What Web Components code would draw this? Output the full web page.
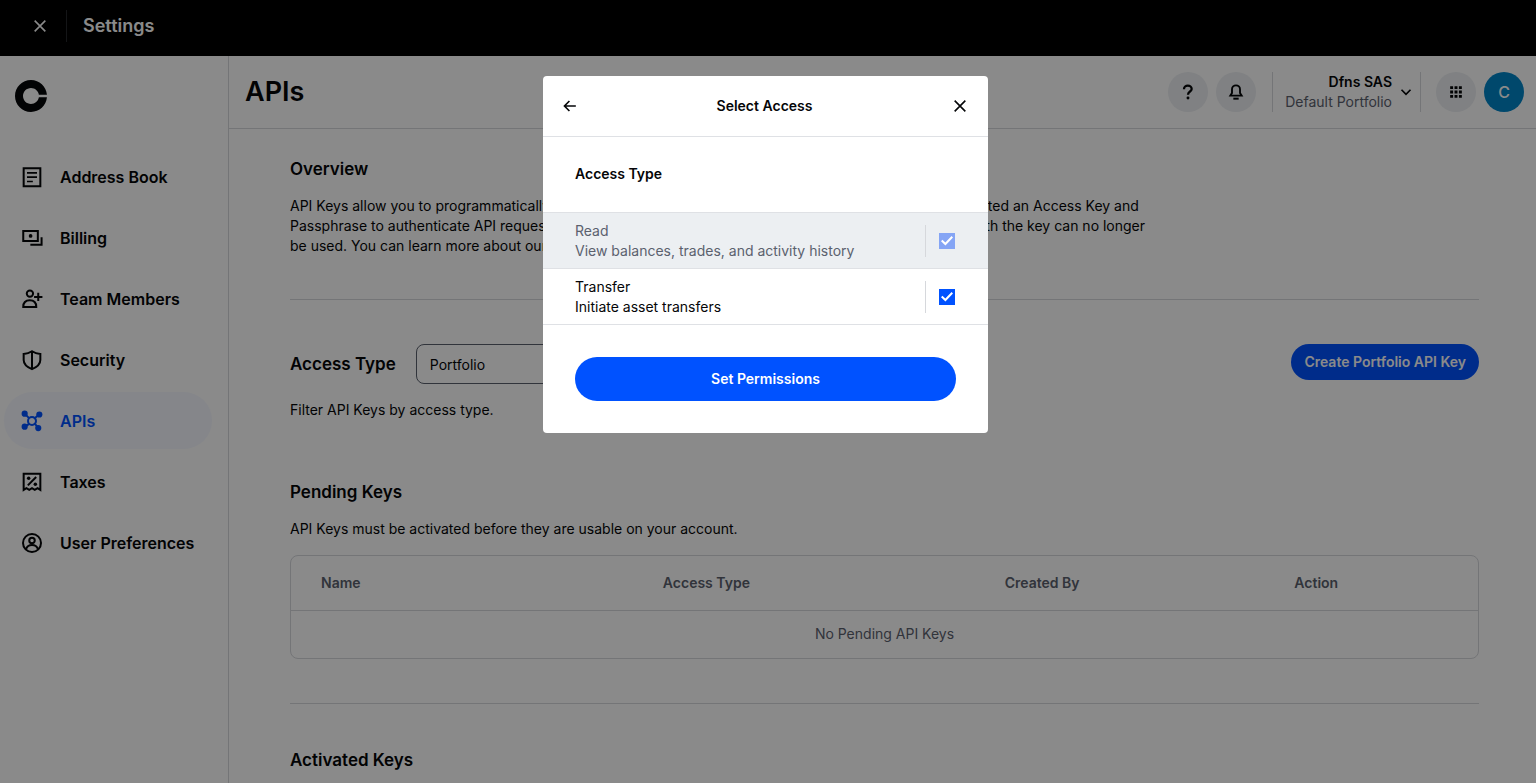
<!DOCTYPE html>
<html lang="en">
<head>
<meta charset="utf-8">
<meta name="viewport" content="width=device-width, initial-scale=1">
<title>Settings</title>
<style>
    html, body {
        margin: 0;
        padding: 0;
    }
    body {
        font-family: Inter, "Liberation Sans", sans-serif;
        font-size: 14px;
        line-height: 20px;
        color: #050608;
        background: #fff;
        --line: #d6d8dc;
        --muted: #5b616e;
        --primary: #0052ff;
        --round: #eceff2;
    }
</style>
</head>
<body>
<settings-page></settings-page>
<select-access-modal></select-access-modal>

<script>
'use strict'

const icons = {
    close: '<path d="M4 4l16 16M20 4L4 20" fill="none" stroke="currentColor" stroke-width="2.4"/>',
    back: '<path d="M22 12H3M11 3.500l-8.500 8.500 8.500 8.500" fill="none" stroke="currentColor" stroke-width="2.800"/>',
    chevron: '<path d="M3 7.500l9 9 9-9" fill="none" stroke="currentColor" stroke-width="3.400"/>',
    logo: '<path transform="scale(.5)" fill="currentColor" d="M24 36c-6.630 0-12-5.370-12-12s5.370-12 12-12c5.940 0 10.870 4.330 11.820 10h12.090C46.890 9.680 36.580 0 24 0 10.750 0 0 10.750 0 24s10.750 24 24 24c12.580 0 22.890-9.680 23.910-22H35.820c-.95 5.670-5.880 10-11.820 10z"/>',
    book: '<g fill="none" stroke="currentColor" stroke-width="2.400"><path d="M2 1.500h20v21.500H2z"/><path d="M6 7h12M6 12.200h12M6 17.400h7" stroke-width="2"/></g>',
    billing: '<g fill="none" stroke="currentColor" stroke-width="2.400"><path d="M1.500 3.500h17.500v12h-17.500z"/><path d="M10 20h13.500V11"/></g><circle cx="10.300" cy="9.500" r="2.200" fill="currentColor"/>',
    team: '<g fill="none" stroke="currentColor" stroke-width="2.400"><circle cx="9.500" cy="5.500" r="3.800"/><path d="M1.500 21.500c0-5 3-8 7.800-8s7.800 3 7.800 8z"/><path d="M19.500 4.500v10M14.500 9.500h10"/></g>',
    shield: '<path d="M12 1.500c3 2 6 3 10 3.200V12c0 5-4 8.500-10 11C6 20.500 2 17 2 12V4.700C6 4.500 9 3.500 12 1.500zM12 2v21" fill="none" stroke="currentColor" stroke-width="2.400"/>',
    api: '<g fill="none" stroke="currentColor" stroke-width="2.400"><circle cx="12" cy="12" r="4.800"/><path d="M3.500 3.500l5 5M21 4l-5.500 4.500M3.500 19l5-3.500M20 20.500l-4.500-5"/></g><g fill="currentColor"><circle cx="3.200" cy="3.200" r="3.700"/><circle cx="20.800" cy="4.200" r="3.700"/><circle cx="3.200" cy="18.800" r="3.700"/><circle cx="19.500" cy="20.500" r="3.700"/></g>',
    tax: '<g fill="none" stroke="currentColor" stroke-width="2.400"><path d="M2 2h20v19.500l-3.300-2.200-3.400 2.200-3.300-2.200-3.300 2.200-3.400-2.200-3.300 2.200z"/><path d="M7 16L17 6"/></g><circle cx="8" cy="7.500" r="2.100" fill="currentColor"/><circle cx="16" cy="14.700" r="2.100" fill="currentColor"/>',
    user: '<g fill="none" stroke="currentColor" stroke-width="2.400"><circle cx="12" cy="12" r="10.800"/><circle cx="12" cy="9" r="3.300"/><path d="M4.800 19.500c1.200-3.500 3.500-5 7.200-5s6 1.500 7.200 5"/></g>',
    help: '<path d="M6 8V7.500a5.500 5 0 0 1 11.500 0c0 4-5.500 3.500-5.500 8.500" fill="none" stroke="currentColor" stroke-width="3.400"/><circle cx="12" cy="21" r="2.200" fill="currentColor"/>',
    bell: '<path d="M3.500 17.500h17l-2.500-4V8a6 6 0 0 0-12 0v5.500z" fill="none" stroke="currentColor" stroke-width="2.800"/><path d="M8 20.500h8v3H8z" fill="currentColor"/>',
    grid: '<path fill="currentColor" d="M2 2h5v5H2zM9.500 2h5v5h-5zM17 2h5v5h-5zM2 9.500h5v5H2zM9.500 9.500h5v5h-5zM17 9.500h5v5h-5zM2 17h5v5H2zM9.500 17h5v5h-5zM17 17h5v5h-5z"/>'
}

class UiIcon extends HTMLElement {
    constructor() {
        super()
        this.attachShadow({mode: 'open'})
    }
    connectedCallback() {
        const size = this.getAttribute('size') || 20
        this.shadowRoot.innerHTML = `
            <style>
                :host { display: block; flex: none; width: ${size}px; height: ${size}px; }
                svg { display: block; width: 100%; height: 100%; overflow: visible; }
            </style>
            <svg viewBox="0 0 24 24" aria-hidden="true">${icons[this.getAttribute('name')]}</svg>
        `
    }
}
customElements.define('ui-icon', UiIcon)

// every other element only needs its markup cloned into a shadow root
function define(name, html) {
    const template = document.createElement('template')
    template.innerHTML = html
    customElements.define(name, class extends HTMLElement {
        constructor() {
            super()
            this.attachShadow({mode: 'open'})
            this.shadowRoot.appendChild(template.content.cloneNode(true))
        }
    })
}

define('top-bar', `
    <style>
        :host {
            display: flex;
            align-items: center;
            height: 56px;
            box-sizing: border-box;
            padding-bottom: 4px;
            background: #000;
            color: #fff;
        }
        button {
            display: flex;
            padding: 12px;
            margin-left: 20px;
            border: 0;
            background: none;
            color: inherit;
        }
        .title {
            padding: 6px 16px;
            margin-left: 6px;
            border-left: 1px solid #25272b;
            font-size: 18px;
            font-weight: 600;
        }
    </style>
    <button aria-label="Close settings"><ui-icon name="close" size="16"></ui-icon></button>
    <div class="title"><slot></slot></div>
`)

class NavItem extends HTMLElement {
    constructor() {
        super()
        this.attachShadow({mode: 'open'})
    }
    connectedCallback() {
        this.shadowRoot.innerHTML = `
            <style>
                :host { display: block; }
                a {
                    display: flex;
                    align-items: center;
                    gap: 18px;
                    height: 57px;
                    padding: 0 16px 0 18px;
                    border-radius: 29px;
                    color: inherit;
                    font-size: 16px;
                    font-weight: 600;
                    text-decoration: none;
                    white-space: nowrap;
                }
                :host([active]) a {
                    background: #f5f8ff;
                    color: var(--primary);
                }
            </style>
            <a href="#"><ui-icon name="${this.getAttribute('icon')}"></ui-icon><slot></slot></a>
        `
    }
}
customElements.define('nav-item', NavItem)

define('side-bar', `
    <style>
        :host {
            display: block;
            box-sizing: border-box;
            padding: 24px 16px 24px 4px;
            border-right: 1px solid var(--line);
        }
        .logo {
            display: block;
            width: 32px;
            margin-left: 11px;
            color: inherit;
        }
        nav {
            display: flex;
            flex-direction: column;
            gap: 4px;
            margin-top: 36px;
        }
    </style>
    <a class="logo" href="#" aria-label="Home"><ui-icon name="logo" size="32"></ui-icon></a>
    <nav>
        <nav-item icon="book">Address Book</nav-item>
        <nav-item icon="billing">Billing</nav-item>
        <nav-item icon="team">Team Members</nav-item>
        <nav-item icon="shield">Security</nav-item>
        <nav-item icon="api" active>APIs</nav-item>
        <nav-item icon="tax">Taxes</nav-item>
        <nav-item icon="user">User Preferences</nav-item>
    </nav>
`)

define('page-header', `
    <style>
        :host {
            display: flex;
            align-items: center;
            gap: 8px;
            height: 73px;
            box-sizing: border-box;
            padding: 0 12px 0 16px;
            border-bottom: 1px solid var(--line);
        }
        h1 {
            flex: 1;
            margin: 0;
            font-size: 27px;
            line-height: 36px;
            font-weight: 600;
        }
        button {
            border: 0;
            padding: 0;
            font: inherit;
            color: inherit;
            background: none;
        }
        .round {
            display: flex;
            align-items: center;
            justify-content: center;
            width: 40px;
            height: 40px;
            border-radius: 50%;
            background: var(--round);
        }
        .avatar {
            background: #0085c8;
            color: #fff;
            font-size: 16px;
            font-weight: 500;
        }
        .account {
            display: flex;
            align-items: center;
            justify-content: flex-end;
            gap: 8px;
            min-width: 149px;
            margin: 0 7px 0 8px;
            padding: 0 8px;
            border: solid var(--line);
            border-width: 0 1px;
            text-align: right;
        }
        .account span {
            display: block;
            color: var(--muted);
        }
        .account .name {
            color: #050608;
            font-weight: 600;
        }
    </style>
    <h1><slot></slot></h1>
    <button class="round" aria-label="Help"><ui-icon name="help" size="16"></ui-icon></button>
    <button class="round" aria-label="Notifications"><ui-icon name="bell" size="16"></ui-icon></button>
    <button class="account">
        <span>
            <span class="name">Dfns SAS</span>
            <span>Default Portfolio</span>
        </span>
        <ui-icon name="chevron" size="12"></ui-icon>
    </button>
    <button class="round" aria-label="Apps"><ui-icon name="grid" size="14"></ui-icon></button>
    <button class="round avatar">C</button>
`)

define('page-section', `
    <style>
        :host {
            display: block;
            padding: 44px 0;
            border-bottom: 1px solid var(--line);
        }
        :host([first]) { padding: 28px 0 43px; }
        :host([last]) {
            padding-bottom: 0;
            border: 0;
        }
        ::slotted(h2) {
            margin: 0;
            font-size: 17px;
            line-height: 24px;
            font-weight: 600;
        }
        ::slotted(p) {
            margin: 15px 0 0;
        }
    </style>
    <slot></slot>
`)

define('access-filter', `
    <style>
        :host {
            display: block;
            margin-bottom: 60px;
        }
        .row {
            display: flex;
            align-items: flex-start;
            justify-content: space-between;
        }
        .field {
            display: flex;
            align-items: center;
            gap: 20px;
        }
        label {
            font-size: 17px;
            line-height: 24px;
            font-weight: 600;
        }
        select {
            width: 220px;
            height: 40px;
            padding: 0 9px;
            border: 1px solid var(--muted);
            border-radius: 8px;
            background: none;
            color: inherit;
            font: inherit;
        }
        button {
            height: 36px;
            padding: 0 13px;
            border: 0;
            border-radius: 18px;
            background: var(--primary);
            color: #fff;
            font: inherit;
            font-weight: 600;
        }
        p { margin: 16px 0 0; }
    </style>
    <div class="row">
        <div class="field">
            <label for="type">Access Type</label>
            <select id="type"><option>Portfolio</option></select>
        </div>
        <button>Create Portfolio API Key</button>
    </div>
    <p>Filter API Keys by access type.</p>
`)

define('key-table', `
    <style>
        :host {
            display: block;
            margin-top: 16px;
            border: 1px solid var(--line);
            border-radius: 8px;
            color: var(--muted);
        }
        table {
            width: 100%;
            table-layout: fixed;
            border-collapse: collapse;
        }
        th {
            box-sizing: border-box;
            height: 54px;
            padding: 0 0 0 30px;
            border-bottom: 1px solid var(--line);
            text-align: left;
            font-weight: 600;
        }
        th:nth-child(-n+2) { width: 28.8%; }
        th:nth-child(3) { width: 24.4%; }
        td {
            height: 47px;
            padding: 0;
            text-align: center;
        }
    </style>
    <table>
        <thead><tr><th>Name</th><th>Access Type</th><th>Created By</th><th>Action</th></tr></thead>
        <tbody><tr><td colspan="4">No Pending API Keys</td></tr></tbody>
    </table>
`)

define('settings-page', `
    <style>
        :host { display: block; }
        .body {
            display: grid;
            grid-template-columns: 229px 1fr;
            min-height: calc(100vh - 56px);
        }
        main {
            padding: 0 57px 0 61px;
        }
        .intro { max-width: 860px; }
    </style>
    <top-bar>Settings</top-bar>
    <div class="body">
        <side-bar></side-bar>
        <div>
            <page-header>APIs</page-header>
            <main>
                <page-section first>
                    <h2>Overview</h2>
                    <p class="intro">API Keys allow you to programmatically access your account. Once a key is generated, you will be presented an Access Key and Passphrase to authenticate API requests. Keep your Passphrase in one secure place, because without both the key can no longer be used. You can learn more about our API here.</p>
                </page-section>
                <page-section>
                    <access-filter></access-filter>
                    <h2>Pending Keys</h2>
                    <p>API Keys must be activated before they are usable on your account.</p>
                    <key-table></key-table>
                </page-section>
                <page-section last>
                    <h2>Activated Keys</h2>
                </page-section>
            </main>
        </div>
    </div>
`)

class AccessOption extends HTMLElement {
    constructor() {
        super()
        this.attachShadow({mode: 'open'})
    }
    connectedCallback() {
        const disabled = this.hasAttribute('disabled') ? 'disabled' : ''
        this.shadowRoot.innerHTML = `
            <style>
                :host { display: block; border-bottom: 1px solid #dfe1e5; }
                :host([disabled]) {
                    background: #eceff2;
                    color: var(--muted);
                }
                label {
                    display: flex;
                    align-items: center;
                    padding: 8px 33px 7px 32px;
                }
                .text { flex: 1; }
                .text span { display: block; }
                .check {
                    display: flex;
                    align-items: center;
                    height: 32px;
                    padding-left: 13px;
                    border-left: 1px solid #d6d8dc;
                }
                input {
                    appearance: none;
                    width: 16px;
                    height: 16px;
                    margin: 0;
                    border: 0;
                    background: var(--primary);
                    display: grid;
                    place-items: center;
                }
                input::before {
                    content: '';
                    width: 12px;
                    height: 10px;
                    background: #fff;
                    clip-path: polygon(0 52%, 12% 38%, 36% 66%, 88% 0, 100% 14%, 37% 96%);
                }
                input:disabled { background: #85a5f5; }
            </style>
            <label>
                <span class="text"><span>${this.getAttribute('name')}</span><span><slot></slot></span></span>
                <span class="check"><input type="checkbox" checked ${disabled}></span>
            </label>
        `
    }
}
customElements.define('access-option', AccessOption)

define('select-access-modal', `
    <style>
        :host {
            position: fixed;
            inset: 0;
            display: flex;
            align-items: flex-start;
            justify-content: center;
            padding: 76px 16px 16px;
            background: rgba(0, 0, 0, .46);
        }
        .dialog {
            width: 445px;
            margin-right: 5px;
            border-radius: 4px;
            background: #fff;
            overflow: hidden;
        }
        header {
            display: flex;
            align-items: center;
            justify-content: space-between;
            height: 60px;
            padding: 0 20px;
            border-bottom: 1px solid #dfe1e5;
        }
        h2, h3 {
            margin: 0;
            font-size: 14px;
            line-height: 20px;
            font-weight: 600;
        }
        h3 {
            padding: 27px 32px 28px;
            border-bottom: 1px solid #dfe1e5;
        }
        header button {
            padding: 0;
            border: 0;
            background: none;
            color: inherit;
        }
        footer { padding: 32px; }
        footer button {
            width: 100%;
            height: 44px;
            border: 0;
            border-radius: 22px;
            background: var(--primary);
            color: #fff;
            font: inherit;
            font-weight: 600;
        }
    </style>
    <div class="dialog" role="dialog" aria-modal="true" aria-labelledby="title">
        <header>
            <button aria-label="Back"><ui-icon name="back" size="14"></ui-icon></button>
            <h2 id="title">Select Access</h2>
            <button aria-label="Close"><ui-icon name="close" size="16"></ui-icon></button>
        </header>
        <h3>Access Type</h3>
        <access-option name="Read" disabled>View balances, trades, and activity history</access-option>
        <access-option name="Transfer">Initiate asset transfers</access-option>
        <footer><button>Set Permissions</button></footer>
    </div>
`)
</script>
</body>
</html>
